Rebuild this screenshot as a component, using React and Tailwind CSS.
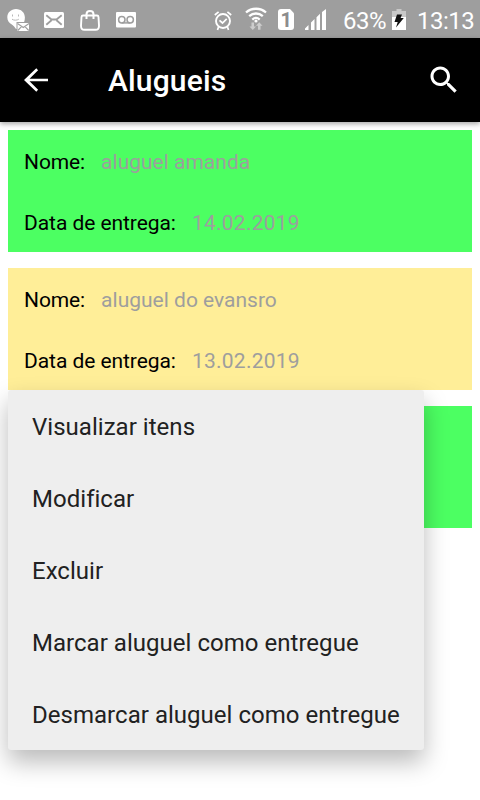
function GhostMailIcon() {
  return (
    <svg className="ml-[7px] mt-[8px] shrink-0" width="23" height="24" viewBox="0 0 23 24">
      <path d="M9 1C4 1 .3 4.600 .3 9.300c0 3.700 2 5.800 4.500 7.200 1.800 1 3 2.800 4.200 4.500h1V14.500h7c.6-1.500.9-3.200.9-5C17.900 4.500 14 1 9 1Z" fill="#fff" />
      <path d="M5.500 6.500v2M11.500 6.500v2M5 11.200c1.800 1.300 5 1.300 6.800 0" fill="none" stroke="#b8b8b8" strokeWidth="1" />
      <path d="M9.500 14h13v9.500h-13Z" fill="#9e9e9e" />
      <rect x="10.500" y="15" width="11.500" height="8" fill="#fff" />
      <path d="m10.500 15.500 5.800 4L22 15.500M10.800 22.500l3.700-3.800M21.700 22.500l-3.700-3.800" fill="none" stroke="#9e9e9e" strokeWidth="1.100" />
    </svg>
  );
}

function MailIcon() {
  return (
    <svg className="ml-[14px] mt-[12px] shrink-0" width="20" height="16" viewBox="0 0 20 16">
      <rect width="20" height="16" rx="1.500" fill="#fff" />
      <path d="M2.300 3.300 7.500 7.500h5l5.200-4.200M2.300 12.700l5.200-4.500M17.700 12.700l-5.200-4.500" fill="none" stroke="#9e9e9e" strokeWidth="1.800" />
    </svg>
  );
}

function BagIcon() {
  return (
    <svg className="ml-[16px] mt-[9px] shrink-0" width="20" height="22" viewBox="0 0 20 22">
      <path d="M3 6.500h14c1.200 0 1.400.5 1.500 1.500l.5 8.500c.1 3-1.200 4.300-3.500 4.300h-11C2.200 20.800.9 19.500 1 16.500L1.500 8c.1-1 .3-1.500 1.500-1.500Z" fill="none" stroke="#fff" strokeWidth="1.900" />
      <path d="M6.500 10V5.200C6.500 3 8 1.900 10 1.900s3.500 1.100 3.500 3.300V10" fill="none" stroke="#fff" strokeWidth="2" />
    </svg>
  );
}

function VoicemailIcon() {
  return (
    <svg className="ml-[16px] mt-[12px] shrink-0" width="20" height="16" viewBox="0 0 20 16">
      <rect width="20" height="15.500" rx="1" fill="#fff" />
      <g fill="none" stroke="#9e9e9e" strokeWidth="1.500">
        <circle cx="5.800" cy="7.700" r="3.200" />
        <circle cx="14.200" cy="7.700" r="3.200" />
        <path d="M5.800 10.900h8.400" />
      </g>
    </svg>
  );
}

function AlarmIcon() {
  return (
    <svg className="mt-[10px] shrink-0" width="18" height="21" viewBox="0 0 18 21">
      <g fill="none" stroke="#fff">
        <circle cx="9" cy="11" r="7" strokeWidth="1.900" />
        <path d="M5.500 10.300 8.500 13l4.200-4.200M.8 5l3.800-3.200M17.200 5l-3.800-3.200" strokeWidth="1.700" />
        <path d="m4.500 17-1 3M13.500 17l1 3" strokeWidth="1.700" />
      </g>
    </svg>
  );
}

function WifiIcon() {
  return (
    <svg className="ml-[13px] mt-[7px] shrink-0" width="22" height="24" viewBox="0 0 22 24">
      <g fill="none" stroke="#fff" strokeWidth="2.300">
        <path d="M1 5.500c5.500-5 14.500-5 20 0" />
        <path d="M4.200 9.200c4-3.600 9.600-3.600 13.600 0" />
        <path d="M7.300 12.600c2.200-2 5.200-2 7.400 0" />
      </g>
      <circle cx="11" cy="14" r="1.600" fill="#fff" />
      <path d="M6.500 15.500H9v4h2L7.800 23l-3.300-3.500h2ZM13 22.800h2.500v-4h2L14.200 15.300l-3.200 3.500h2Z" fill="#cdcdcd" />
    </svg>
  );
}

function SimIcon() {
  return (
    <span className="ml-[11px] mt-[9px] flex h-[21px] w-4 shrink-0 items-center justify-center rounded-[3px] bg-white font-['Roboto',sans-serif] text-[20px] font-bold leading-none text-[#8c8c8c] [clip-path:polygon(0_0,75%_0,100%_20%,100%_100%,0_100%)]">
      1
    </span>
  );
}

function SignalIcon() {
  return (
    <svg className="ml-[11px] mt-[9px] shrink-0" width="21" height="21" viewBox="0 0 21 21">
      <path d="M0 21v-1.500L3.500 16v5ZM6 21v-7.500L9.500 10v11ZM11.500 21V8.300L15 4.800V21ZM17 21V3l4-3v21Z" fill="#fff" />
    </svg>
  );
}

function BatteryIcon() {
  return (
    <svg className="mt-[9px] shrink-0" width="14" height="21" viewBox="0 0 14 21">
      <path d="M4.500 0h5v2H14v6H0V2h4.500Z" fill="#c9c9c9" />
      <path d="M0 8h14v13H0Z" fill="#fff" />
      <path d="M5 5.500h5L8.600 9h3.200L4 18.500 5.700 13H2.500Z" fill="#101010" />
    </svg>
  );
}

function StatusBar() {
  return (
    <div className="flex h-[38px] items-start bg-[#9e9e9e] text-2xl tracking-[-0.5px] text-white">
      <GhostMailIcon />
      <MailIcon />
      <BagIcon />
      <VoicemailIcon />
      <div className="ml-[78px] flex w-[115px] items-start">
        <AlarmIcon />
        <WifiIcon />
        <SimIcon />
        <SignalIcon />
      </div>
      <span className="ml-[14px] mt-[5px] w-[49px] whitespace-nowrap leading-8">63%</span>
      <BatteryIcon />
      <span className="ml-[11px] mt-[5px] whitespace-nowrap leading-8">13:13</span>
    </div>
  );
}

function AppBar() {
  return (
    <header className="relative flex h-[84px] items-center bg-black pl-[18px] pr-[18px] text-white shadow-[0_2px_5px_rgba(0,0,0,0.35)]">
      <svg width="36" height="36" viewBox="0 0 24 24" fill="#fff">
        <path d="M20 11.150H7.700l5.700-5.700L12.200 4.200 4 12l8.200 7.800 1.200-1.250-5.700-5.700H20z" />
      </svg>
      <h1 className="ml-[54px] flex-1 pt-0.5 text-[30px] font-medium leading-9 tracking-[0.15px]">Alugueis</h1>
      <svg width="36" height="36" viewBox="0 0 24 24" fill="#fff">
        <path d="M15.500 14h-.79l-.28-.27C15.410 12.590 16 11.110 16 9.500 16 5.910 13.090 3 9.500 3S3 5.910 3 9.500 5.910 16 9.500 16c1.610 0 3.090-.59 4.230-1.570l.27.28v.79l5 4.990L20.490 19l-4.990-5zm-6 0C7.010 14 5 11.990 5 9.500S7.010 5 9.500 5 14 7.010 14 9.500 11.990 14 9.500 14z" />
      </svg>
    </header>
  );
}

function RentalCard({ name, date, color }) {
  return (
    <article className={`flex h-[122px] flex-col pl-4 text-[21px] leading-[25px] ${color}`}>
      <p className="mt-5 flex gap-4">
        <span className="tracking-[-0.1px] text-black">Nome:</span>
        <span className="text-[#9e9e9e]">{name}</span>
      </p>
      <p className="mt-9 flex gap-4">
        <span className="tracking-[-0.06px] text-black">Data de entrega:</span>
        <span className="tracking-[0.25px] text-[#9e9e9e]">{date}</span>
      </p>
    </article>
  );
}

const menuItems = [
  "Visualizar itens",
  "Modificar",
  "Excluir",
  "Marcar aluguel como entregue",
  "Desmarcar aluguel como entregue",
];

function ContextMenu() {
  return (
    <ul className="absolute left-0 top-full z-10 w-[416px] rounded-[3px] bg-[#eeeeee] text-2xl text-[#212121] shadow-[0_12px_24px_rgba(0,0,0,0.27)]">
      {menuItems.map((item) => (
        <li key={item} className="flex h-[72px] items-center whitespace-nowrap pl-6 pt-0.5 tracking-[0.03px] [font-variant-ligatures:common-ligatures]">
          {item}
        </li>
      ))}
    </ul>
  );
}

export default function App() {
  return (
    <div className="h-[800px] w-[480px] overflow-hidden bg-white font-['Roboto',sans-serif]">
      <StatusBar />
      <AppBar />
      <main className="flex flex-col gap-4 p-2">
        <RentalCard name="aluguel amanda" date="14.02.2019" color="bg-[#4cff62]" />
        <div className="relative">
          <RentalCard name="aluguel do evansro" date="13.02.2019" color="bg-[#ffee98]" />
          <ContextMenu />
        </div>
        <div className="h-[122px] bg-[#4cff62]" />
      </main>
    </div>
  );
}
